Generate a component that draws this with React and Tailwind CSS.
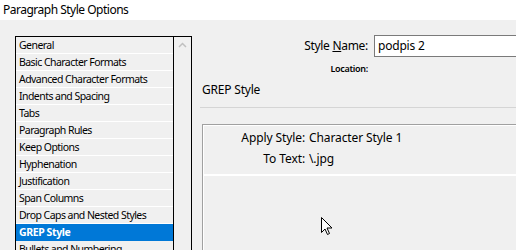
import React from 'react'

const items = [
	'General',
	'Basic Character Formats',
	'Advanced Character Formats',
	'Indents and Spacing',
	'Tabs',
	'Paragraph Rules',
	'Keep Options',
	'Hyphenation',
	'Justification',
	'Span Columns',
	'Drop Caps and Nested Styles',
	'GREP Style',
	'Bullets and Numbering',
]

const Cursor = () => (
	<svg width="12" height="19" viewBox="0 0 12 19" className="block">
		<path d="M0.5 0.5 L0.5 15.5 L4 12 L6.5 17.5 L8.5 16.5 L6 11 L11 11 Z" fill="#fff" stroke="#000" strokeWidth="1" strokeLinejoin="miter" />
	</svg>
)

const App = () => {
	const selected = 'GREP Style'
	return (
		<div className="w-[516px] h-[250px] overflow-hidden bg-[#f0f0f0] text-black" style={{ fontFamily: '"Noto Sans", "Open Sans", sans-serif' }}>
			<div className="h-[20px] bg-white pl-[3px] text-[12px] tracking-[-0.5px] leading-[20px]">Paragraph Style Options</div>
			<div className="flex">
				{/* left list */}
				<div className="pl-[15px] pt-[16px] shrink-0">
					<div className="flex w-[177px] h-[240px] border border-black bg-white">
						<div className="w-[157px] flex flex-col">
							{items.map((it) => (
								<div
									key={it}
									className={
										it === selected
											? 'h-[17px] shrink-0 bg-[#0078d7] text-white font-bold text-[10.5px] tracking-[-0.4px] leading-[17px] pl-[3px]'
											: 'h-[17px] shrink-0 bg-[#f0f0f0] border-b border-white text-[10.5px] tracking-[-0.55px] leading-[16px] pl-[3px]'
									}
								>
									{it}
								</div>
							))}
						</div>
						<div className="w-[18px] border-l border-black bg-[#f0f0f0] flex justify-center pt-[5px]">
							<svg width="9" height="6" viewBox="0 0 9 6">
								<path d="M1 5 L4.5 1.5 L8 5" fill="none" stroke="#c0c0c0" strokeWidth="1.5" />
							</svg>
						</div>
					</div>
				</div>
				{/* right side */}
				<div className="ml-[8px] w-[316px] overflow-hidden">
					<div className="flex items-center mt-[15px] h-[22px]">
						<div className="w-[168px] shrink-0 text-right text-[12px] tracking-[-0.3px]">
							Style <span className="underline">N</span>ame:
						</div>
						<div className="ml-[6px] w-[200px] h-[22px] shrink-0 bg-white border border-[#7a7a7a] pl-[3px] text-[12px] tracking-[-0.2px] leading-[20px]">
							podpis 2
						</div>
					</div>
					<div className="w-[168px] text-right text-[9px] font-semibold tracking-[-0.3px] leading-[12px] mt-[6px]">Location:</div>
					<div className="text-[12px] tracking-[-0.2px] leading-[16px] mt-[7px] pl-[2px]">GREP Style</div>
					<div className="h-px bg-[#d5d5d5] mt-[9px]" />
					<div className="ml-[2px] mt-[16px] border-t border-l border-[#a0a0a0] h-[140px]">
						<div className="border-t border-l border-white h-full">
							<div className="flex text-[12px] tracking-[-0.1px] leading-[20px] pt-[2px]">
								<div className="w-[101px] text-right">Apply Style:</div>
								<div className="pl-[4px]">Character Style 1</div>
							</div>
							<div className="flex text-[12px] tracking-[-0.1px] leading-[20px] mt-[1px]">
								<div className="w-[101px] text-right">To Text:</div>
								<div className="pl-[4px]">\.jpg</div>
							</div>
							<div className="h-[2px] bg-white mt-[5px]" />
							<div className="pl-[117px] pt-[41px]">
								<Cursor />
							</div>
						</div>
					</div>
				</div>
			</div>
		</div>
	)
}

export default App
